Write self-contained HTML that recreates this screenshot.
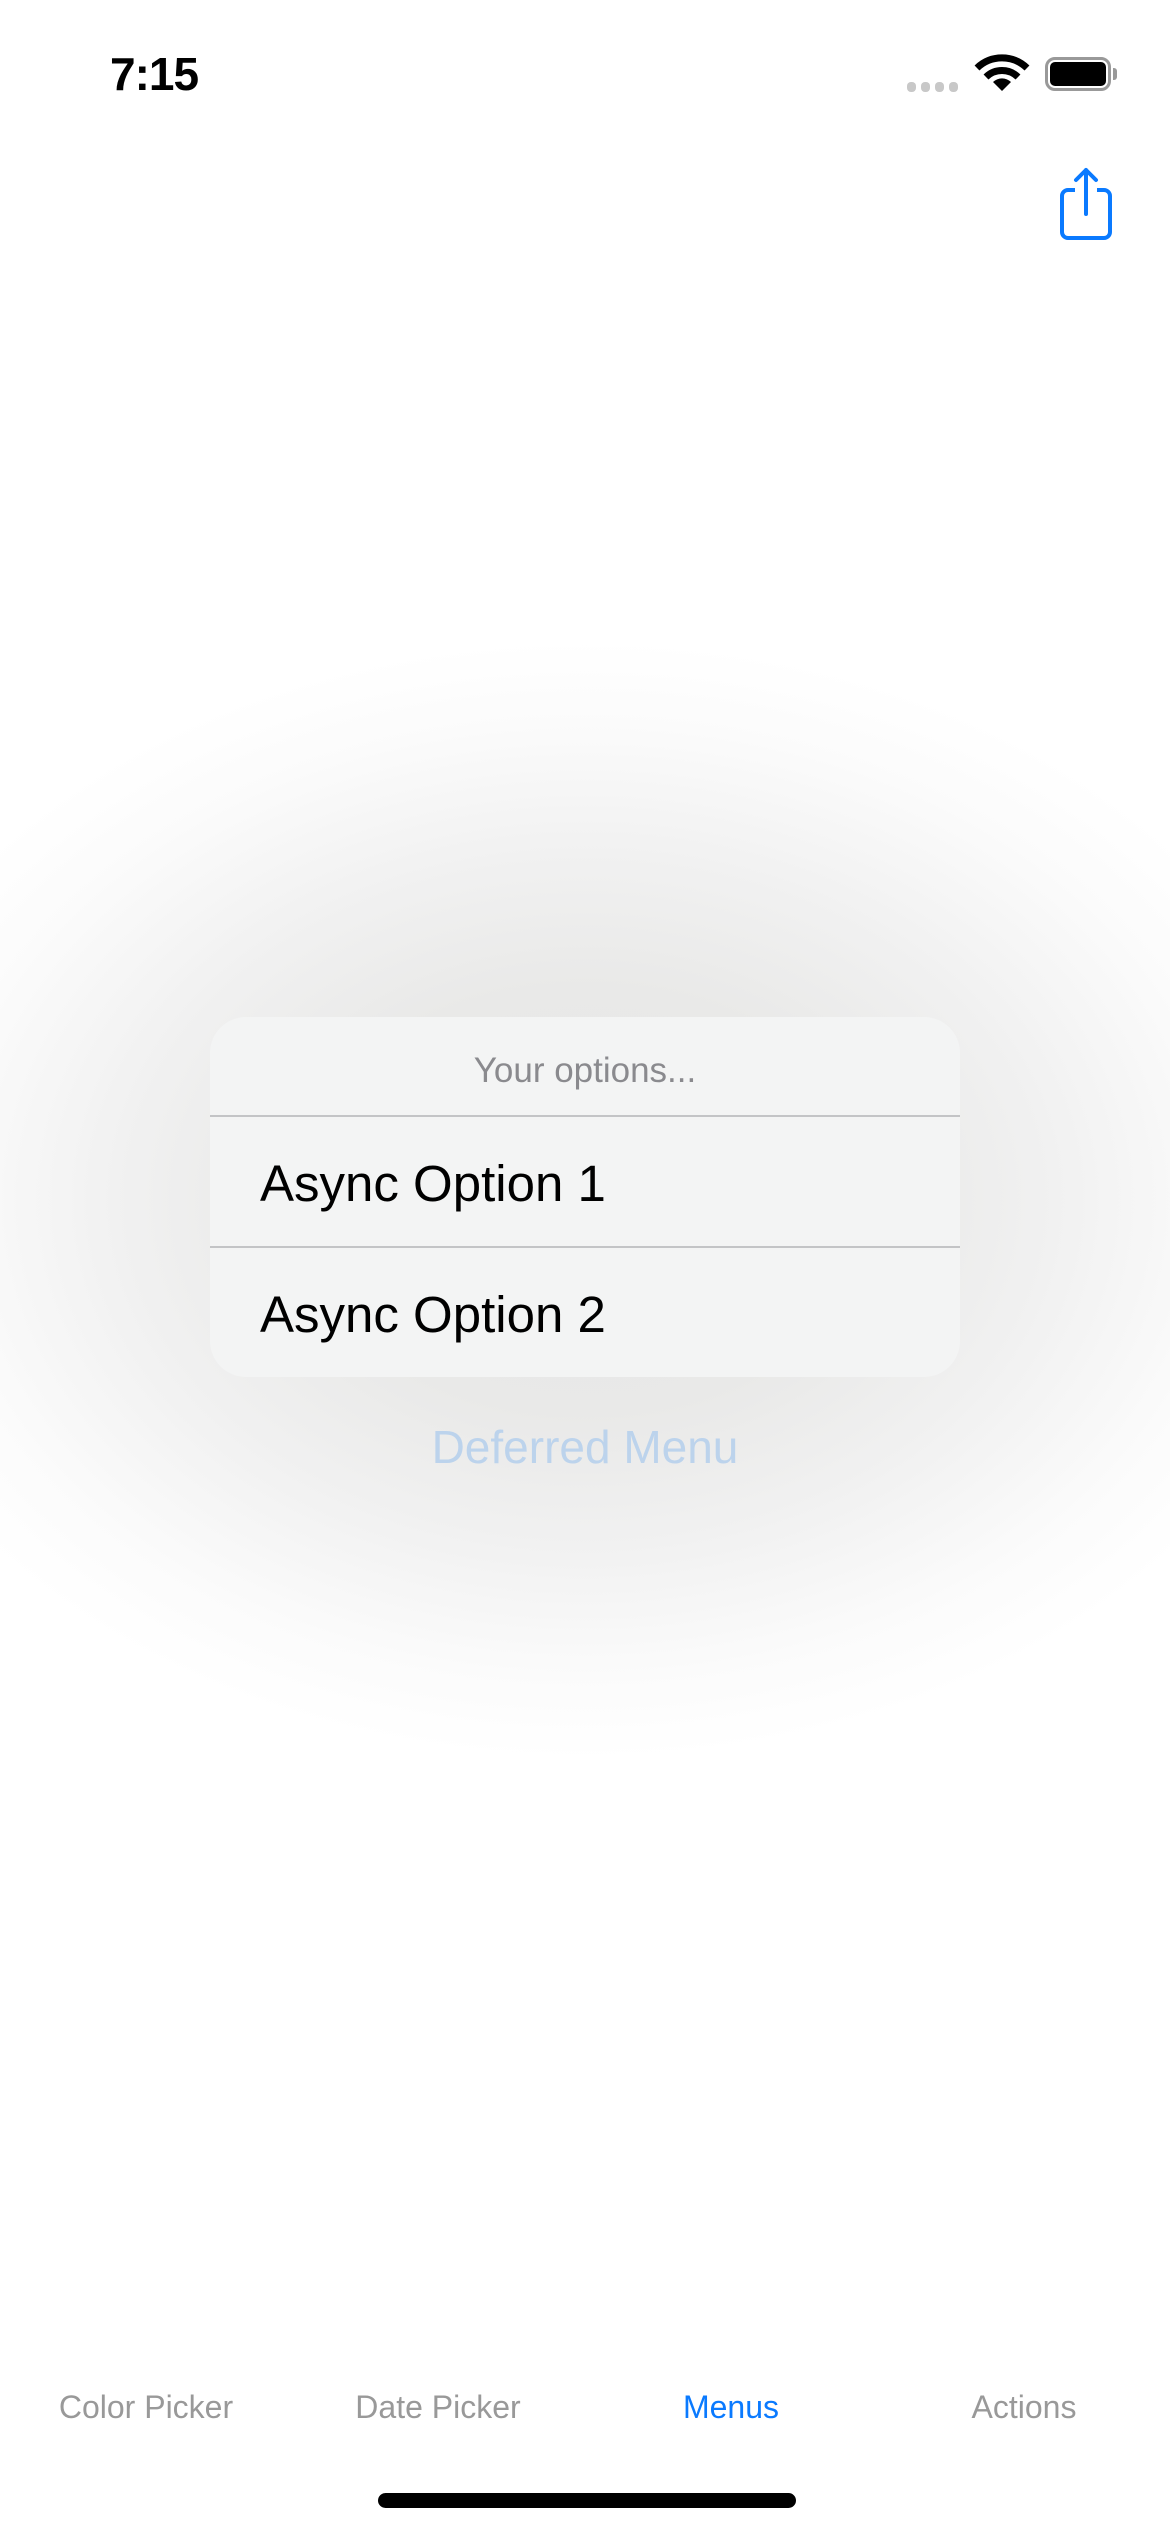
<!DOCTYPE html>
<html><head><meta charset="utf-8"><style>
*{margin:0;padding:0;box-sizing:border-box}
html,body{width:1170px;height:2532px;overflow:hidden;background:#fff;font-family:"Liberation Sans",sans-serif}
.bg{position:absolute;left:0;top:0;width:1170px;height:2532px;
background:radial-gradient(ellipse 760px 560px at 585px 1200px,#e6e6e5 0%,#e9e9e8 38%,#f1f1f1 62%,#fbfbfb 85%,#fff 100%)}
.abs{position:absolute}
.card{left:210px;top:1017px;width:750px;height:360px;background:#f3f4f4;border-radius:36px;overflow:hidden}
.sep{position:absolute;left:0;width:100%;height:2px;background:#c3c4c6}
.t{position:absolute;white-space:nowrap}
</style></head><body>
<div class="bg"></div>
<div class="t" style="left:110px;top:47px;font-size:46px;font-weight:bold;color:#000;letter-spacing:-1px">7:15</div>
<div class="abs" style="left:907px;top:82px">
<span class="abs" style="left:0;top:0;width:9px;height:10px;border-radius:4px;background:#c8c8c8"></span>
<span class="abs" style="left:14px;top:0;width:9px;height:10px;border-radius:4px;background:#c8c8c8"></span>
<span class="abs" style="left:28px;top:0;width:9px;height:10px;border-radius:4px;background:#c8c8c8"></span>
<span class="abs" style="left:42px;top:0;width:9px;height:10px;border-radius:4px;background:#c8c8c8"></span>
</div>
<svg class="abs" style="left:974px;top:54px" width="56" height="38" viewBox="0 0 56 38">
<path d="M3 14 A36 36 0 0 1 53 14" stroke="#000" stroke-width="7" fill="none"/>
<path d="M12 23 A23 23 0 0 1 44 23" stroke="#000" stroke-width="7" fill="none"/>
<path d="M28 37 L19 28 A13 13 0 0 1 37 28 Z" fill="#000"/>
</svg>
<div class="abs" style="left:1045px;top:57px;width:66px;height:34px;border:3px solid #999;border-radius:10px"></div>
<div class="abs" style="left:1050px;top:62px;width:56px;height:24px;background:#000;border-radius:5px"></div>
<div class="abs" style="left:1113px;top:68px;width:4px;height:12px;background:#999;border-radius:0 3px 3px 0"></div>
<svg class="abs" style="left:1056px;top:166px" width="60" height="76" viewBox="0 0 60 76">
<path d="M19 24 H12 A6 6 0 0 0 6 30 V66 A6 6 0 0 0 12 72 H48 A6 6 0 0 0 54 66 V30 A6 6 0 0 0 48 24 H41" stroke="#0a7aff" stroke-width="4" fill="none"/>
<path d="M30 48 V4 M20 14 L30 4 L40 14" stroke="#0a7aff" stroke-width="4" fill="none" stroke-linecap="round" stroke-linejoin="round"/>
</svg>
<div class="abs card">
<div class="t" style="left:0;width:750px;text-align:center;top:34px;font-size:35px;color:#8a8a8e">Your options...</div>
<div class="sep" style="top:98px"></div>
<div class="t" style="left:50px;top:137px;font-size:51px;color:#000">Async Option 1</div>
<div class="sep" style="top:229px"></div>
<div class="t" style="left:50px;top:268px;font-size:51px;color:#000">Async Option 2</div>
</div>
<div class="t" style="left:0;width:1170px;text-align:center;top:1420px;font-size:46px;color:#bcd3ec">Deferred Menu</div>
<div class="t" style="left:6px;width:280px;text-align:center;top:2389px;font-size:32px;color:#999">Color Picker</div>
<div class="t" style="left:298px;width:280px;text-align:center;top:2389px;font-size:32px;color:#999">Date Picker</div>
<div class="t" style="left:591px;width:280px;text-align:center;top:2389px;font-size:32px;color:#0a7aff">Menus</div>
<div class="t" style="left:884px;width:280px;text-align:center;top:2389px;font-size:32px;color:#999">Actions</div>
<div class="abs" style="left:378px;top:2493px;width:418px;height:15px;background:#000;border-radius:8px"></div>
</body></html>
